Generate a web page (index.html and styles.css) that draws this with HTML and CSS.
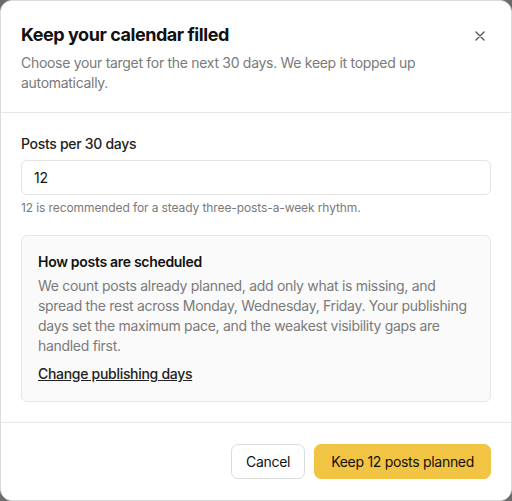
FILE: index.html
```html
<!DOCTYPE html>
<html>
<head>
<meta charset="utf-8">
<link rel="stylesheet" href="styles.css">
</head>
<body>
<div class="dialog">
  <header class="head">
    <div class="head-text">
      <h1 class="title">Keep your calendar filled</h1>
      <p class="subtitle">Choose your target for the next 30 days. We keep it topped up automatically.</p>
    </div>
    <button class="close" aria-label="Close">
      <svg width="10" height="10" viewBox="0 0 10 10"><path d="M1 1L9 9M9 1L1 9" stroke="#555" stroke-width="1.3" stroke-linecap="round"/></svg>
    </button>
  </header>
  <main class="body">
    <label class="label">Posts per 30 days</label>
    <div class="input">12</div>
    <p class="hint">12 is recommended for a steady three-posts-a-week rhythm.</p>
    <section class="info">
      <h2 class="info-title">How posts are scheduled</h2>
      <p class="info-text">We count posts already planned, add only what is missing, and spread the rest across Monday, Wednesday, Friday. Your publishing days set the maximum pace, and the weakest visibility gaps are handled first.</p>
      <a class="link">Change publishing days</a>
    </section>
  </main>
  <footer class="foot">
    <button class="btn btn-secondary">Cancel</button>
    <button class="btn btn-primary">Keep 12 posts planned</button>
  </footer>
</div>
</body>
</html>
```
FILE: styles.css
```css
* { box-sizing: border-box; }
html, body { margin: 0; padding: 0; }
body {
  width: 512px;
  height: 501px;
  background: #6b6b6b;
  font-family: "Inter", "Liberation Sans", sans-serif;
  color: #1a1a1a;
  overflow: hidden;
  letter-spacing: -0.3px;
}
.dialog {
  width: 512px;
  height: 501px;
  background: #fff;
  border: 1px solid #dcdcdc;
  border-radius: 12px;
  display: flex;
  flex-direction: column;
}
.head {
  display: flex;
  justify-content: space-between;
  align-items: flex-start;
  padding: 22px 20px 19px 20px;
  border-bottom: 1px solid #e6e6e6;
}
.title {
  margin: 0;
  font-size: 18px;
  font-weight: 700;
  line-height: 24px;
  letter-spacing: -0.45px;
  color: #111;
}
.subtitle {
  margin: 6px 0 0;
  font-size: 14px;
  line-height: 20px;
  color: #7a7a7a;
  width: 420px;
}
.close {
  border: 0;
  background: none;
  padding: 0;
  margin: 7px 5px 0 0;
  width: 12px;
  height: 12px;
  display: flex;
  align-items: center;
  justify-content: center;
}
.body {
  padding: 21px 20px 20px 20px;
  border-bottom: 1px solid #e6e6e6;
  display: flex;
  flex-direction: column;
}
.label {
  font-size: 14px;
  line-height: 20px;
  color: #222;
  font-weight: 500;
}
.input {
  margin-top: 6px;
  height: 35px;
  border: 1px solid #e4e4e4;
  border-radius: 6px;
  padding: 0 12px;
  display: flex;
  align-items: center;
  font-size: 14px;
  color: #111;
}
.hint {
  margin: 5px 0 0;
  font-size: 12px;
  line-height: 16px;
  letter-spacing: -0.1px;
  color: #7a7a7a;
}
.info {
  margin-top: 19px;
  background: #fafafa;
  border: 1px solid #e6e6e6;
  border-radius: 6px;
  padding: 16px 16px 17px 16px;
}
.info-title {
  margin: 0;
  font-size: 14px;
  line-height: 20px;
  font-weight: 600;
  color: #111;
}
.info-text {
  margin: 4px 0 0;
  font-size: 14px;
  line-height: 20px;
  color: #7a7a7a;
}
.link {
  display: inline-block;
  margin-top: 8px;
  font-size: 14px;
  line-height: 20px;
  font-weight: 500;
  color: #222;
  text-decoration: underline;
}
.foot {
  flex: 1;
  display: flex;
  justify-content: flex-end;
  align-items: center;
  gap: 9px;
  padding: 0 20px;
}
.btn {
  height: 35px;
  border-radius: 7px;
  font-family: inherit;
  font-size: 14px;
  letter-spacing: -0.3px;
  padding: 0 15px;
  color: #111;
}
.btn-secondary {
  background: #fff;
  border: 1px solid #dcdcdc;
  padding: 0 14px;
}
.btn-primary {
  background: #f2c443;
  border: 1px solid #f2c443;
  padding: 0 16px;
}
```
